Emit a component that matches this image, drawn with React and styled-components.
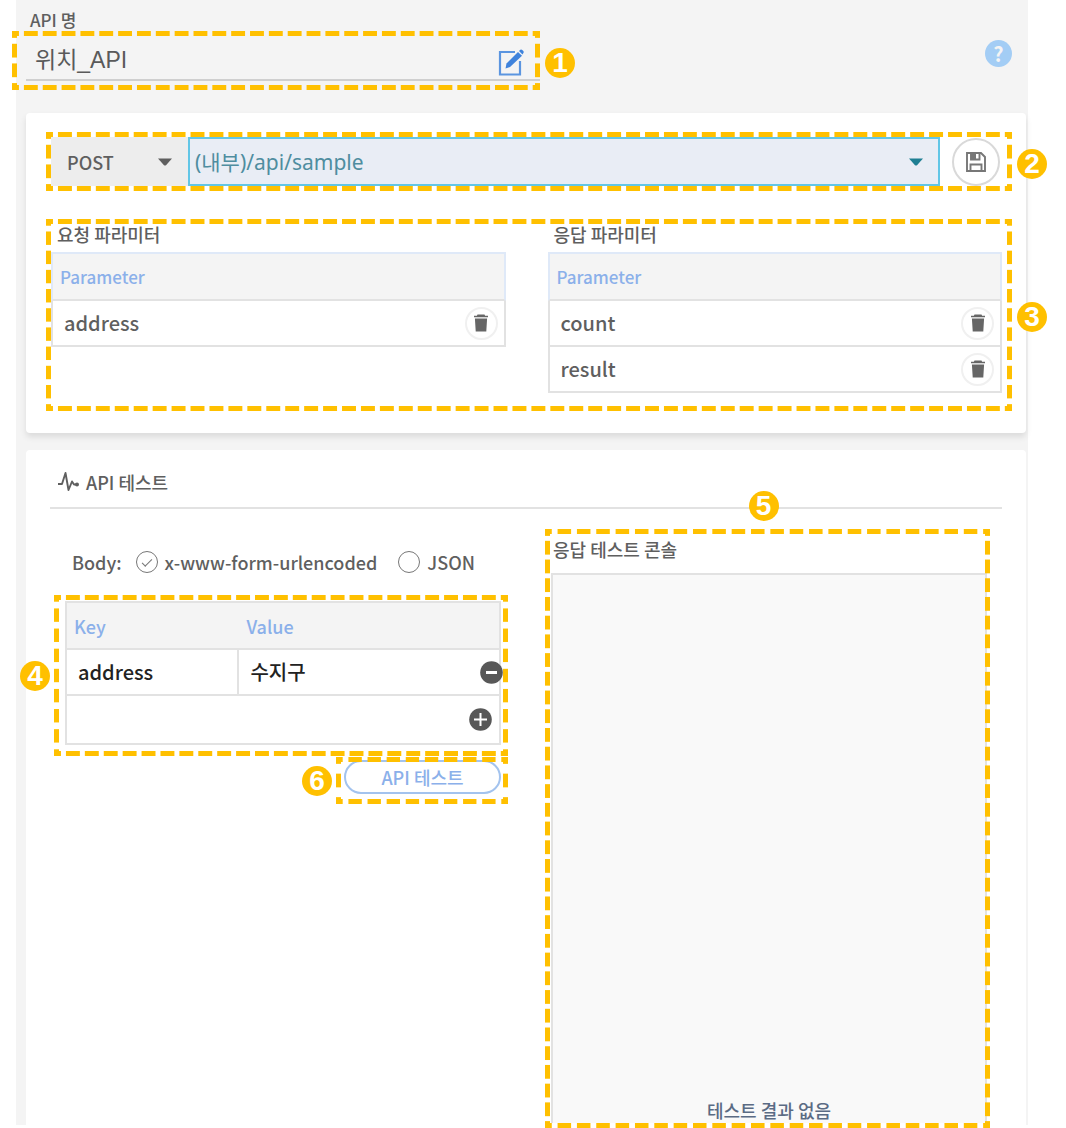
import React, { useState } from "react";
import styled, { createGlobalStyle, css } from "styled-components";

const GOLD = "#ffc000";
const LINE = "#e2e2e2";
const BLUE = "#8bb0ea";
const INK = "#5f5f5f";

const DASH = `${GOLD} 7px, transparent 7px, transparent calc(100% - 7px), ${GOLD} calc(100% - 7px)`;

const GlobalStyle = createGlobalStyle`
  *, *::before, *::after { box-sizing: border-box; }
  body {
    margin: 0;
    background: #fff;
    color: ${INK};
    font-family: "Noto Sans CJK KR", sans-serif;
    font-size: 18px;
    font-weight: 500;
    line-height: 24px;
  }
  button, input, select { font: inherit; color: inherit; margin: 0; }
  button { padding: 0; border: 0; background: none; cursor: pointer; }
`;

const Page = styled.main`
  padding: 0 38px 3px 16px;
`;

const Panel = styled.div`
  padding: 0 2px 0 10px;
  background: #f4f4f4;
`;

/* Guide frame: content in normal flow with a dashed outline laid over it */
const Frame = styled.div`
  position: relative;
  min-width: 0;
  &::after {
    content: "";
    position: absolute;
    inset: 0;
    pointer-events: none;
    background-image:
      linear-gradient(90deg, ${DASH}),
      linear-gradient(90deg, ${DASH}),
      linear-gradient(${DASH}),
      linear-gradient(${DASH});
    background-size: 19px 5px, 19px 5px, 5px 19px, 5px 19px;
    background-position: 0 0, 0 100%, 0 0, 100% 0;
    background-repeat: round no-repeat, round no-repeat, no-repeat round, no-repeat round;
  }
`;

const badgeSides = {
  right: css`left: calc(100% + 5px); top: calc(50% - 13px);`,
  left: css`right: calc(100% + 4px); top: calc(50% - 15px);`,
  top: css`left: calc(50% - 19px); bottom: calc(100% + 8px);`,
};

const Badge = styled.span`
  position: absolute;
  z-index: 1;
  display: grid;
  place-items: center;
  width: 30px;
  height: 30px;
  border-radius: 50%;
  background: ${GOLD};
  color: #fff;
  font: bold 28px/30px "Liberation Sans", sans-serif;
  ${(p) => badgeSides[p.$side]}
`;

const NameLabel = styled.label`
  display: block;
  padding: 8px 0 0 4px;
  font-size: 17px;
  line-height: 23px;
`;

const Header = styled.header`
  display: flex;
  align-items: flex-start;
  justify-content: space-between;
  padding-right: 14px;
  margin-bottom: 23px;
`;

const NameFrame = styled(Frame)`
  flex: 0 1 528px;
  margin-left: -14px;
  padding: 5px 0 9px 14px;
`;

const NameField = styled.div`
  display: flex;
  align-items: flex-end;
  height: 45px;
  padding: 0 15px 3px 9px;
  border-bottom: 2px solid #cfcfcf;
`;

const NameInput = styled.input`
  flex: 1;
  min-width: 0;
  height: 36px;
  padding: 0;
  border: 0;
  outline: 0;
  background: none;
  font: 400 23px/30px "Liberation Sans", "Noto Sans CJK KR", sans-serif;
  color: #5a5a5a;
`;

const IconButton = styled.button`
  display: grid;
  place-items: center;
  flex: none;
`;

const HelpButton = styled(IconButton)`
  width: 27px;
  height: 27px;
  margin-top: 9px;
  border-radius: 50%;
  background: #a3cdf5;
  color: #f4f4f4;
  font-size: 20px;
  font-weight: 700;
  line-height: 27px;
`;

const Card = styled.section`
  background: #fff;
  border-radius: ${(p) => (p.$open ? "4px 4px 0 0" : "4px")};
  box-shadow: ${(p) => (p.$open ? "none" : "0 4px 6px rgba(0, 0, 0, 0.1)")};
`;

const RequestCard = styled(Card)`
  display: flex;
  flex-direction: column;
  gap: 28px;
  padding: 19px 14px 22px 20px;
  margin-bottom: 17px;
`;

const RequestFrame = styled(Frame)`
  display: flex;
  align-items: center;
  padding: 5px 12px 5px 5px;
`;

const SelectBox = styled.div`
  display: grid;
  align-items: center;
  flex: ${(p) => (p.$wide ? "1" : "0 0 137px")};
  min-width: 0;
  height: 49px;
  background: ${(p) => (p.$wide ? "#e9edf5" : "#ededed")};
  border: 2px solid ${(p) => (p.$wide ? "#62c6e6" : "#ededed")};
  color: ${(p) => (p.$wide ? "#1f7f93" : INK)};
  > * { grid-area: 1 / 1; }
  > svg {
    justify-self: end;
    margin-right: ${(p) => (p.$wide ? "15px" : "14px")};
    pointer-events: none;
  }
`;

const Select = styled.select`
  appearance: none;
  width: 100%;
  height: 45px;
  padding: 0 36px 0 14px;
  border: 0;
  outline: 0;
  background: none;
`;

const UrlSelect = styled(Select)`
  padding-left: 5px;
  color: #4f8da0;
  font: 400 21px/28px "Noto Sans", "Noto Sans CJK KR", sans-serif;
`;

const SaveButton = styled(IconButton)`
  width: 48px;
  height: 48px;
  margin-left: 12px;
  border: 2px solid #d9d9d9;
  border-radius: 50%;
  color: #777;
`;

const ParamFrame = styled(Frame)`
  display: grid;
  grid-template-columns: 1fr 1fr;
  align-items: start;
  gap: 42px;
  padding: 5px 10px 18px 5px;
`;

const Caption = styled.caption`
  height: 28px;
  padding-left: 6px;
  text-align: left;
  line-height: 20px;
`;

const Table = styled.table`
  width: 100%;
  border-collapse: separate;
  border-spacing: 0;
  table-layout: fixed;
`;

const Th = styled.th`
  height: 49px;
  padding: 0 7px;
  background: #f4f4f4;
  border: solid ${(p) => p.$edge || "#dfe9f8"};
  border-width: 2px 0;
  border-bottom-color: ${LINE};
  color: ${BLUE};
  font-size: ${(p) => p.$size || 17}px;
  font-weight: 500;
  text-align: left;
  &:first-child { border-left-width: 2px; }
  &:last-child { border-right-width: 2px; }
`;

const Td = styled.td`
  height: 46px;
  padding: 0 0 0 11px;
  border: solid ${LINE};
  border-width: 0 2px 2px 0;
  font-size: 20px;
  color: ${(p) => (p.$dark ? "#222" : INK)};
  &:first-child { border-left-width: 2px; }
`;

const Cell = styled.div`
  display: flex;
  align-items: center;
  justify-content: space-between;
  padding-right: ${(p) => p.$right || 0}px;
`;

const TrashButton = styled(IconButton)`
  width: 33px;
  height: 33px;
  border: 2px solid #f0f0f0;
  border-radius: 50%;
  color: #666;
`;

const RemoveButton = styled(IconButton)`
  margin-right: -4px;
`;

const TestCard = styled(Card)`
  padding: 0 24px;
`;

const TestTitle = styled.h2`
  display: flex;
  align-items: center;
  gap: 6px;
  height: 59px;
  margin: 0;
  padding: 6px 0 0 7px;
  border-bottom: 2px solid ${LINE};
  font-size: 18px;
  font-weight: 500;
`;

const TestGrid = styled.div`
  display: grid;
  grid-template-columns: 454fr 445fr;
  gap: 37px;
  padding: 0 12px 0 4px;
`;

const FormColumn = styled.form`
  display: flex;
  flex-direction: column;
  min-width: 0;
  padding-top: 41px;
`;

const BodyRow = styled.fieldset`
  display: flex;
  align-items: center;
  height: 22px;
  margin: 0 0 23px;
  padding: 0 0 0 18px;
  border: 0;
  white-space: nowrap;
`;

const Choice = styled.label`
  display: flex;
  align-items: center;
  gap: 7px;
  margin-left: ${(p) => p.$gap}px;
`;

const Radio = styled.input`
  appearance: none;
  display: grid;
  place-items: center;
  width: 22px;
  height: 22px;
  margin: 0;
  border: 1px solid #777;
  border-radius: 50%;
  &:checked::before {
    content: "";
    width: 10px;
    height: 5px;
    margin-bottom: 2px;
    border: solid #777;
    border-width: 0 0 1px 1px;
    transform: rotate(-45deg);
  }
`;

const PairFrame = styled(Frame)`
  padding: 6px 7px 11px 11px;
`;

const FooterTd = styled(Td)`
  height: 49px;
`;

const ValueInput = styled.input`
  width: 100%;
  min-width: 0;
  padding: 0;
  border: 0;
  outline: 0;
  background: none;
`;

const RunFrame = styled(Frame)`
  align-self: flex-end;
  margin-top: 1px;
  padding: 3px 7px 10px 8px;
`;

const RunButton = styled.button`
  display: block;
  width: 157px;
  height: 34px;
  border: 2px solid #a3c3ee;
  border-radius: 17px;
  background: #fff;
  color: ${BLUE};
`;

const ConsoleFrame = styled(Frame)`
  margin: 20px 0 -3px;
  padding: 5px 3px 5px 6px;
`;

const ConsoleTitle = styled.h3`
  height: 39px;
  margin: 0;
  padding-left: 2px;
  font-size: 18px;
  font-weight: 500;
  line-height: 30px;
`;

const Console = styled.output`
  display: flex;
  align-items: flex-end;
  justify-content: center;
  min-height: 550px;
  padding-bottom: 1px;
  background: #f9f9f9;
  border: 2px solid ${LINE};
  border-bottom: 0;
  color: #5b6b84;
`;

const Caret = () => (
  <svg width="14" height="8" viewBox="0 0 14 8" aria-hidden="true">
    <path d="M0 .5h14L8 7.2q-1 .8-2 0z" fill="currentColor" />
  </svg>
);

const EditIcon = () => (
  <svg width="27" height="28" viewBox="0 0 27 28" fill="none" aria-hidden="true">
    <path d="M17 4H2v22.500h20V13" stroke="#5b95e0" strokeWidth="2.2" />
    <path d="M7.500 20.500l1-5L20 4l4 3.800L12 19z" fill="#3f83dc" />
    <path d="M21 3l1.300-1.200q1-.8 2 .2l1 1q1 1 .1 2L24.500 6.500z" fill="#3f83dc" />
  </svg>
);

const SaveIcon = () => (
  <svg width="22" height="22" viewBox="0 0 22 22" fill="none" stroke="currentColor" strokeWidth="1.900" aria-hidden="true">
    <path d="M2 2h14l4 4v14H2z" />
    <path d="M5.500 20v-6.500h11V20M6 2v6.500h8.500V2" />
    <path d="M6 2h5v6H6z" fill="currentColor" stroke="none" />
  </svg>
);

const TrashIcon = () => (
  <svg width="16" height="18" viewBox="0 0 16 18" fill="currentColor" aria-hidden="true">
    <path d="M4.500 .6h7l.6 1.200H15v1.500H1V1.800h2.900z" />
    <path d="M1.900 4.500h12.200l-.8 13H2.700z" />
  </svg>
);

const PulseIcon = () => (
  <svg width="23" height="22" viewBox="0 0 23 22" fill="none" aria-hidden="true">
    <path d="M1 13h4L8.500 2l3 17 3.500-8.500 2 3h3" stroke="currentColor" strokeWidth="1.900" strokeLinejoin="round" />
    <circle cx="20" cy="13.500" r="2" fill="currentColor" />
  </svg>
);

const RoundIcon = ({ plus }) => (
  <svg width="23" height="23" viewBox="0 0 23 23" aria-hidden="true">
    <circle cx="11.500" cy="11.500" r="11.300" fill="#585858" />
    <path d={plus ? "M5 11.500h13M11.500 5v13" : "M6 11.500h11"} stroke="#fff" strokeWidth={plus ? 2 : 3} />
  </svg>
);

function ParamTable({ title, names }) {
  return (
    <Table>
      <Caption>{title}</Caption>
      <thead>
        <tr><Th scope="col">Parameter</Th></tr>
      </thead>
      <tbody>
        {names.map((name) => (
          <tr key={name}>
            <Td>
              <Cell $right={6}>
                {name}
                <TrashButton type="button" aria-label={`${name} 삭제`}><TrashIcon /></TrashButton>
              </Cell>
            </Td>
          </tr>
        ))}
      </tbody>
    </Table>
  );
}

export default function App() {
  const [bodyType, setBodyType] = useState("form");
  const [name, setName] = useState("위치_API");
  const [value, setValue] = useState("수지구");

  return (
    <Page>
      <GlobalStyle />
      <Panel>
        <NameLabel htmlFor="api-name">API 명</NameLabel>
        <Header>
          <NameFrame>
            <NameField>
              <NameInput id="api-name" value={name} onChange={(e) => setName(e.target.value)} />
              <IconButton type="button" aria-label="이름 수정"><EditIcon /></IconButton>
            </NameField>
            <Badge $side="right">1</Badge>
          </NameFrame>
          <HelpButton type="button" aria-label="도움말">?</HelpButton>
        </Header>

        <RequestCard>
          <RequestFrame>
            <SelectBox>
              <Select aria-label="메서드" defaultValue="POST">
                <option>POST</option>
              </Select>
              <Caret />
            </SelectBox>
            <SelectBox $wide>
              <UrlSelect aria-label="API 경로" defaultValue="(내부)/api/sample">
                <option>(내부)/api/sample</option>
              </UrlSelect>
              <Caret />
            </SelectBox>
            <SaveButton type="button" aria-label="저장"><SaveIcon /></SaveButton>
            <Badge $side="right">2</Badge>
          </RequestFrame>
          <ParamFrame>
            <ParamTable title="요청 파라미터" names={["address"]} />
            <ParamTable title="응답 파라미터" names={["count", "result"]} />
            <Badge $side="right">3</Badge>
          </ParamFrame>
        </RequestCard>

        <TestCard $open>
          <TestTitle><PulseIcon />API 테스트</TestTitle>
          <TestGrid>
            <FormColumn onSubmit={(e) => e.preventDefault()}>
              <BodyRow aria-label="Body">
                <span>Body:</span>
                <Choice $gap={14}>
                  <Radio type="radio" name="body" checked={bodyType === "form"} onChange={() => setBodyType("form")} />
                  x-www-form-urlencoded
                </Choice>
                <Choice $gap={21}>
                  <Radio type="radio" name="body" checked={bodyType === "json"} onChange={() => setBodyType("json")} />
                  JSON
                </Choice>
              </BodyRow>
              <PairFrame>
                <Table>
                  <colgroup>
                    <col width="40%" />
                    <col />
                  </colgroup>
                  <thead>
                    <tr>
                      <Th scope="col" $edge={LINE} $size={18}>Key</Th>
                      <Th scope="col" $edge={LINE} $size={18}>Value</Th>
                    </tr>
                  </thead>
                  <tbody>
                    <tr>
                      <Td $dark>address</Td>
                      <Td $dark>
                        <Cell>
                          <ValueInput aria-label="address" value={value} onChange={(e) => setValue(e.target.value)} />
                          <RemoveButton type="button" aria-label="행 삭제"><RoundIcon /></RemoveButton>
                        </Cell>
                      </Td>
                    </tr>
                    <tr>
                      <FooterTd colSpan={2}>
                        <Cell $right={7}>
                          <span />
                          <IconButton type="button" aria-label="행 추가"><RoundIcon plus /></IconButton>
                        </Cell>
                      </FooterTd>
                    </tr>
                  </tbody>
                </Table>
                <Badge $side="left">4</Badge>
              </PairFrame>
              <RunFrame>
                <RunButton type="submit">API 테스트</RunButton>
                <Badge $side="left">6</Badge>
              </RunFrame>
            </FormColumn>
            <ConsoleFrame>
              <ConsoleTitle>응답 테스트 콘솔</ConsoleTitle>
              <Console>테스트 결과 없음</Console>
              <Badge $side="top">5</Badge>
            </ConsoleFrame>
          </TestGrid>
        </TestCard>
      </Panel>
    </Page>
  );
}
